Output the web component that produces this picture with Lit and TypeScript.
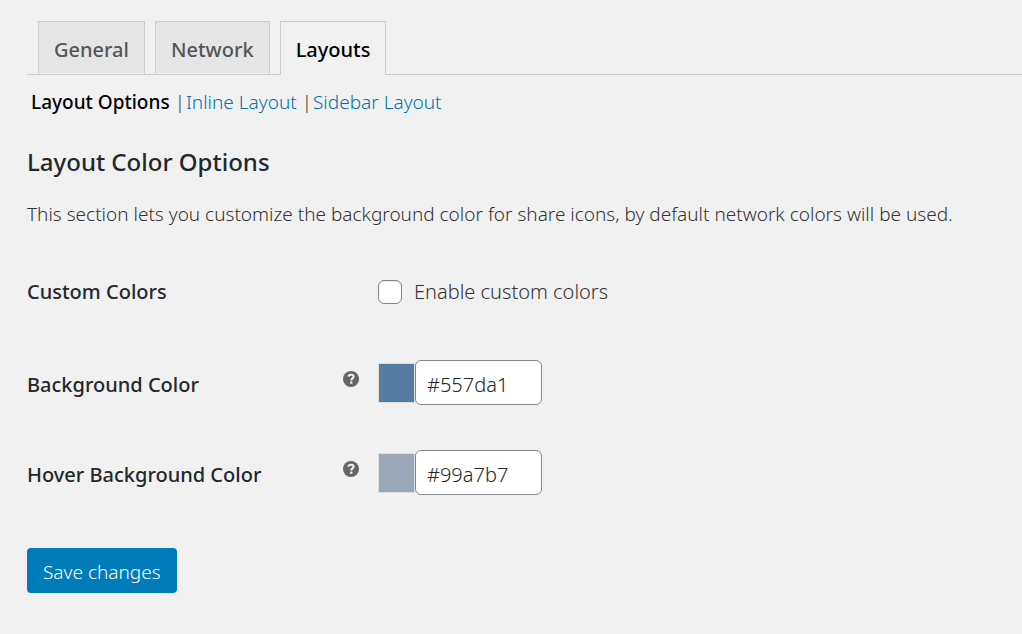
import { LitElement, html, css } from "lit";
import { customElement, property, state } from "lit/decorators.js";
import { classMap } from "lit/directives/class-map.js";
import { styleMap } from "lit/directives/style-map.js";

const TABS = ["General", "Network", "Layouts"];
const SECTIONS = ["Layout Options", "Inline Layout", "Sidebar Layout"];

@customElement("help-tip")
export class HelpTip extends LitElement {
  @property() text = "";

  static styles = css`
    :host {
      display: block;
    }
    .icon {
      display: block;
      width: 16px;
      height: 16px;
    }
  `;

  render() {
    return html`
      <svg class="icon" viewBox="0 0 16 16" role="img" aria-label=${this.text}>
        <circle cx="8" cy="8" r="8" fill="#666" />
        <path
          d="M5.4 5.7C5.6 4.2 6.7 3.7 8.1 3.7c1.6 0 2.5.8 2.5 1.9 0 1.8-2.3 1.7-2.3 3.8"
          fill="none"
          stroke="#f1f1f1"
          stroke-width="2.1"
        />
        <rect x="7.1" y="10.6" width="2.3" height="2.2" rx="0.6" fill="#f1f1f1" />
      </svg>
    `;
  }
}

@customElement("color-field")
export class ColorField extends LitElement {
  @property() label = "";
  @property() value = "";

  static styles = css`
    :host {
      display: flex;
      align-items: center;
    }
    .swatch {
      box-sizing: border-box;
      width: 37px;
      height: 40px;
      border: 1px solid #ddd;
    }
    .value {
      box-sizing: border-box;
      width: 127px;
      height: 45px;
      margin: 0;
      padding: 3px 11px 0;
      border: 1px solid #7e8993;
      border-radius: 6px;
      background: #fff;
      color: #23282d;
      font: inherit;
    }
  `;

  private onInput(event: Event) {
    this.value = (event.target as HTMLInputElement).value;
  }

  render() {
    return html`
      <span class="swatch" style=${styleMap({ backgroundColor: this.value })}></span>
      <input
        class="value"
        type="text"
        aria-label=${this.label}
        .value=${this.value}
        @input=${this.onInput}
      />
    `;
  }
}

@customElement("app-root")
export class AppRoot extends LitElement {
  @state() private tab = "Layouts";
  @state() private section = "Layout Options";

  static styles = css`
    :host {
      display: block;
      box-sizing: border-box;
      min-height: 100vh;
      padding: 21px 0 40px 27px;
      background: #f1f1f1;
      color: #333;
      font-family: "Segoe UI", "Noto Sans", "Open Sans", sans-serif;
      font-size: 19px;
      font-weight: 320;
      line-height: 28px;
    }
    .tabs {
      display: flex;
      gap: 10px;
      padding-left: 11px;
      border-bottom: 1px solid #ccc;
    }
    .tab {
      box-sizing: border-box;
      height: 53px;
      padding: 14px 15px 0;
      border: 1px solid #ccc;
      border-bottom: 1px solid #f1f1f1;
      background: #e5e5e5;
      color: #555;
      font-size: 20px;
      font-weight: 500;
      text-decoration: none;
    }
    .tab.active {
      height: 54px;
      margin-bottom: -1px;
      background: #f1f1f1;
      color: #000;
    }
    .sections {
      display: flex;
      margin: 0;
      padding: 13px 0 0 4px;
      list-style: none;
    }
    .section + .section {
      margin-left: 5px;
    }
    .section + .section::before {
      content: "|";
      margin-right: 1px;
    }
    .link {
      color: #0073aa;
      text-decoration: none;
    }
    .link.current {
      color: #000;
      font-weight: 500;
    }
    .title {
      margin: 28px 0 0;
      color: #23282d;
      font-size: 24px;
      font-weight: 500;
      line-height: 36px;
    }
    .intro {
      margin: 20px 0 0;
    }
    .form {
      display: grid;
      grid-template-columns: 316px 35px 1fr;
      row-gap: 45px;
      align-items: center;
      margin-top: 41px;
    }
    .label {
      color: #23282d;
      font-size: 20px;
      font-weight: 500;
    }
    .label.low {
      padding-top: 5px;
    }
    .help {
      align-self: start;
      margin-top: 11px;
    }
    .field {
      font-size: 20px;
    }
    .toggle {
      display: flex;
      align-items: center;
      gap: 12px;
      min-height: 46px;
    }
    .box {
      appearance: none;
      box-sizing: border-box;
      width: 24px;
      height: 24px;
      margin: 0;
      border: 1px solid #7e8993;
      border-radius: 6px;
      background: #fff;
      box-shadow: inset 0 1px 2px rgba(0, 0, 0, 0.1);
    }
    .box:checked {
      background: #007cba;
    }
    .save {
      height: 45px;
      margin-top: 53px;
      padding: 2px 16px 0;
      border: 0;
      border-radius: 4px;
      background: #007cba;
      color: #fff;
      font: inherit;
    }
  `;

  render() {
    return html`
      <nav class="tabs">
        ${TABS.map(
          (name) => html`<a
            class=${classMap({ tab: true, active: name === this.tab })}
            href="#${name.toLowerCase()}"
            @click=${() => (this.tab = name)}
            >${name}</a
          >`
        )}
      </nav>
      <ul class="sections">
        ${SECTIONS.map(
          (name) => html`<li class="section"><a
            class=${classMap({ link: true, current: name === this.section })}
            href="#${name.toLowerCase().replace(" ", "-")}"
            @click=${() => (this.section = name)}
            >${name}</a
          ></li>`
        )}
      </ul>
      <h2 class="title">Layout Color Options</h2>
      <p class="intro">
        This section lets you customize the background color for share icons, by default network
        colors will be used.
      </p>
      <form @submit=${(event: Event) => event.preventDefault()}>
        <div class="form">
          <span class="label">Custom Colors</span>
          <span></span>
          <label class="field toggle">
            <input class="box" type="checkbox" />
            Enable custom colors
          </label>
          <span class="label low">Background Color</span>
          <help-tip class="help" text="Background color help"></help-tip>
          <color-field class="field" label="Background Color" value="#557da1"></color-field>
          <span class="label low">Hover Background Color</span>
          <help-tip class="help" text="Hover background color help"></help-tip>
          <color-field class="field" label="Hover Background Color" value="#99a7b7"></color-field>
        </div>
        <button class="save" type="submit">Save changes</button>
      </form>
    `;
  }
}
